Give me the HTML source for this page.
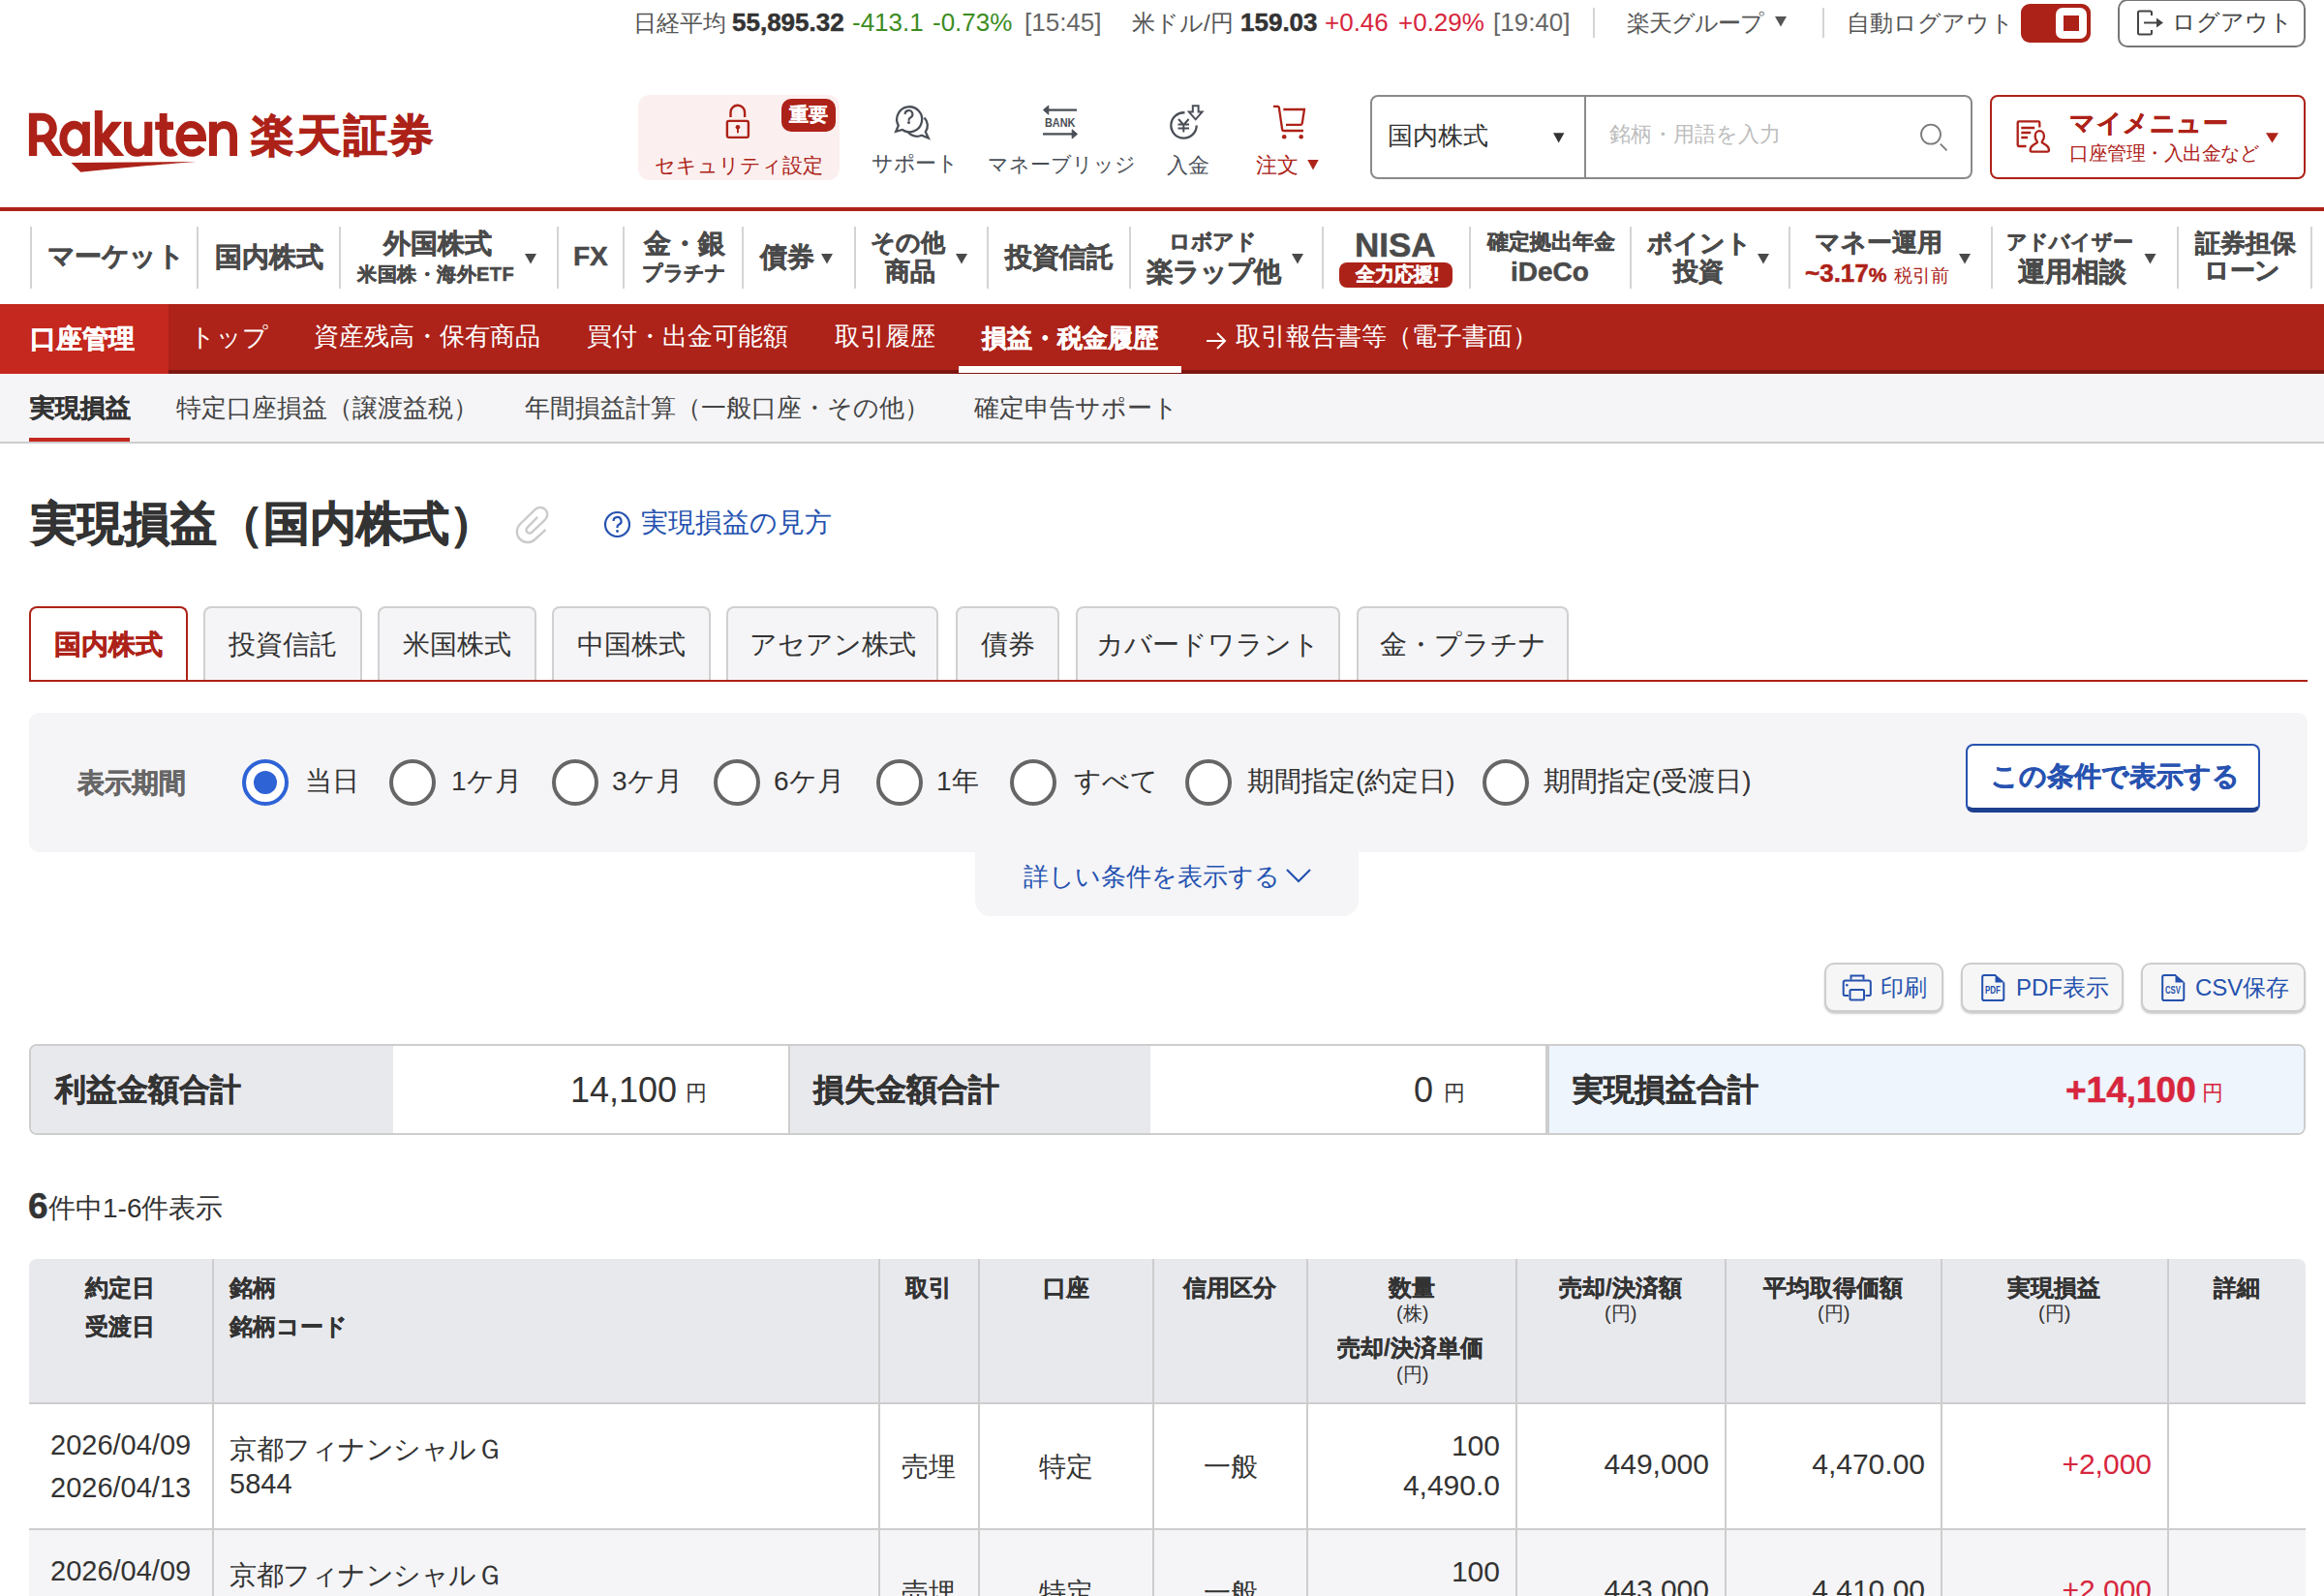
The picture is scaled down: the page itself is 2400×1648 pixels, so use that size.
<!DOCTYPE html>
<html><head><meta charset="utf-8">
<style>
html,body{margin:0;padding:0;}
body{width:2400px;height:1648px;overflow:hidden;position:relative;background:#fff;font-family:"Liberation Sans",sans-serif;color:#333;}
.a{position:absolute;white-space:nowrap;line-height:1;}
.b{font-weight:bold;-webkit-text-stroke:0.5px currentColor;}
.sk{-webkit-text-stroke:0.5px currentColor;}
.sep{position:absolute;width:2px;background:#d4d4d4;}
svg{position:absolute;overflow:visible;}
</style></head><body>

<!-- ===== TOP BAR ===== -->
<div class="a" style="left:654px;top:12px;font-size:24px;color:#555">日経平均</div>
<div class="a b" style="left:756px;top:10px;font-size:26px;color:#333">55,895.32</div>
<div class="a" style="left:880px;top:10px;font-size:26px;color:#3c8c22">-413.1</div>
<div class="a" style="left:963px;top:10px;font-size:26px;color:#3c8c22">-0.73%</div>
<div class="a" style="left:1058px;top:10px;font-size:26px;color:#666">[15:45]</div>
<div class="a" style="left:1169px;top:12px;font-size:24px;color:#555">米ドル/円</div>
<div class="a b" style="left:1281px;top:10px;font-size:26px;color:#333">159.03</div>
<div class="a" style="left:1368px;top:10px;font-size:26px;color:#d7263d">+0.46</div>
<div class="a" style="left:1444px;top:10px;font-size:26px;color:#d7263d">+0.29%</div>
<div class="a" style="left:1542px;top:10px;font-size:26px;color:#666">[19:40]</div>
<div class="sep" style="left:1645px;top:8px;height:31px;"></div>
<div class="a" style="left:1680px;top:12px;font-size:24px;color:#555;letter-spacing:-1px">楽天グループ</div>
<div class="sep" style="left:1882px;top:8px;height:31px;"></div>
<div class="a" style="left:1907px;top:12px;font-size:24px;color:#555">自動ログアウト</div>
<div style="position:absolute;left:2087px;top:4px;width:72px;height:40px;border-radius:9px;background:#ad2218;"></div>
<div style="position:absolute;left:2123px;top:8px;width:32px;height:32px;border-radius:7px;background:#fff;"></div>
<div style="position:absolute;left:2131px;top:16px;width:16px;height:16px;background:#ad2218;"></div>
<div style="position:absolute;left:2187px;top:-1px;width:190px;height:46px;border:2px solid #777;border-radius:10px;"></div>
<svg style="left:2206px;top:10px" width="30" height="28" viewBox="0 0 30 28"><path d="M16 6 V3 a1.5 1.5 0 0 0 -1.5 -1.5 H3.5 a1.5 1.5 0 0 0 -1.5 1.5 V24 a1.5 1.5 0 0 0 1.5 1.5 H14.5 a1.5 1.5 0 0 0 1.5 -1.5 V21" fill="none" stroke="#444" stroke-width="2"/><path d="M8 13.5 H22" stroke="#444" stroke-width="2"/><path d="M21 8.5 L28 13.5 L21 18.5Z" fill="#444"/></svg>
<div class="a" style="left:2243px;top:11px;font-size:24px;color:#444">ログアウト</div>

<!-- ===== HEADER ===== -->

<div class="a b" style="left:259px;top:117px;font-size:45px;color:#ad2218;letter-spacing:2.8px;-webkit-text-stroke:1.2px #ad2218">楽天証券</div>

<div style="position:absolute;left:659px;top:98px;width:208px;height:88px;border-radius:12px;background:#fbf0ef;"></div>
<div style="position:absolute;left:807px;top:102px;width:56px;height:34px;border-radius:10px;background:#ad2218;"></div>
<div class="a b" style="left:815px;top:108px;font-size:20px;color:#fff;-webkit-text-stroke:0.25px #fff">重要</div>

<div class="a" style="left:676px;top:160px;font-size:21px;color:#ad2218">セキュリティ設定</div>

<!-- support -->

<div class="a" style="left:900px;top:158px;font-size:22px;color:#4a4f57;letter-spacing:-0.5px">サポート</div>
<!-- bank -->

<div class="a" style="left:1020px;top:159px;font-size:21px;color:#4a4f57">マネーブリッジ</div>
<!-- deposit -->

<div class="a" style="left:1205px;top:160px;font-size:22px;color:#4a4f57">入金</div>
<!-- cart -->

<div class="a" style="left:1297px;top:160px;font-size:22px;color:#ad2218">注文</div>

<!-- search -->
<div style="position:absolute;left:1415px;top:98px;width:618px;height:83px;border:2px solid #8a8a8a;border-radius:8px;"></div>
<div style="position:absolute;left:1636px;top:100px;width:2px;height:83px;background:#8a8a8a;"></div>
<div class="a" style="left:1433px;top:127px;font-size:26px;color:#333">国内株式</div>
<div class="a" style="left:1662px;top:128px;font-size:22px;color:#bdbdbd">銘柄・用語を入力</div>


<!-- my menu -->
<div style="position:absolute;left:2055px;top:98px;width:322px;height:83px;border:2px solid #ad2218;border-radius:8px;"></div>

<div class="a b" style="left:2137px;top:114px;font-size:26px;color:#ad2218;letter-spacing:0.5px">マイメニュー</div>
<div class="a" style="left:2137px;top:149px;font-size:19.5px;color:#ad2218;letter-spacing:-0.5px">口座管理・入出金など</div>

<div style="position:absolute;left:0;top:214px;width:2400px;height:4px;background:#ad2218;"></div>

<!-- ===== GLOBAL NAV ===== -->
<div class="sep" style="left:31px;top:234px;height:64px"></div>
<div class="sep" style="left:203px;top:234px;height:64px"></div>
<div class="sep" style="left:350px;top:234px;height:64px"></div>
<div class="sep" style="left:575px;top:234px;height:64px"></div>
<div class="sep" style="left:643px;top:234px;height:64px"></div>
<div class="sep" style="left:766px;top:234px;height:64px"></div>
<div class="sep" style="left:882px;top:234px;height:64px"></div>
<div class="sep" style="left:1019px;top:234px;height:64px"></div>
<div class="sep" style="left:1166px;top:234px;height:64px"></div>
<div class="sep" style="left:1365px;top:234px;height:64px"></div>
<div class="sep" style="left:1517px;top:234px;height:64px"></div>
<div class="sep" style="left:1683px;top:234px;height:64px"></div>
<div class="sep" style="left:1847px;top:234px;height:64px"></div>
<div class="sep" style="left:2056px;top:234px;height:64px"></div>
<div class="sep" style="left:2248px;top:234px;height:64px"></div>
<div class="sep" style="left:2386px;top:234px;height:64px"></div>
<div class="sk" style="color:#4a4a4a;font-weight:bold">
<div class="a" style="left:49px;top:251px;font-size:28px;letter-spacing:-0.6px">マーケット</div>
<div class="a" style="left:222px;top:252px;font-size:28px">国内株式</div>
<div class="a" style="left:396px;top:238px;font-size:28px">外国株式</div>
<div class="a" style="left:369px;top:273px;font-size:20px;letter-spacing:0.5px">米国株・海外ETF</div>
<div class="a" style="left:592px;top:251px;font-size:28px">FX</div>
<div class="a" style="left:665px;top:238px;font-size:28px">金・銀</div>
<div class="a" style="left:663px;top:271px;font-size:21px;letter-spacing:-0.5px">プラチナ</div>
<div class="a" style="left:785px;top:252px;font-size:28px">債券</div>
<div class="a" style="left:899px;top:238px;font-size:25px">その他</div>
<div class="a" style="left:914px;top:267px;font-size:26px">商品</div>
<div class="a" style="left:1038px;top:252px;font-size:28px">投資信託</div>
<div class="a" style="left:1207px;top:239px;font-size:22px;letter-spacing:-0.5px">ロボアド</div>
<div class="a" style="left:1184px;top:267px;font-size:28px;letter-spacing:-1px">楽ラップ他</div>
<div class="a" style="left:1399px;top:235px;font-size:35px">NISA</div>
<div style="position:absolute;left:1383px;top:271px;width:117px;height:26px;border-radius:8px;background:#ad2218"></div>
<div class="a" style="left:1400px;top:273px;font-size:20px;color:#fff">全力応援!</div>
<div class="a" style="left:1536px;top:239px;font-size:22px">確定拠出年金</div>
<div class="a" style="left:1560px;top:267px;font-size:28px">iDeCo</div>
<div class="a" style="left:1701px;top:238px;font-size:26px">ポイント</div>
<div class="a" style="left:1728px;top:267px;font-size:26px">投資</div>
<div class="a" style="left:1874px;top:237px;font-size:26px">マネー運用</div>
<div class="a" style="left:1864px;top:269px;font-size:26px;color:#ad2218">~3.17<span style="font-size:21px">%</span> <span style="font-size:19px;font-weight:normal;-webkit-text-stroke:0">税引前</span></div>
<div class="a" style="left:2072px;top:239px;font-size:21px">アドバイザー</div>
<div class="a" style="left:2084px;top:267px;font-size:28px">運用相談</div>
<div class="a" style="left:2267px;top:238px;font-size:26px">証券担保</div>
<div class="a" style="left:2276px;top:266px;font-size:26px;letter-spacing:-0.5px">ローン</div>
</div>

<!-- ===== RED NAV ===== -->
<div style="position:absolute;left:0;top:314px;width:2400px;height:72px;background:#ad2219"></div>
<div style="position:absolute;left:174px;top:382px;width:2226px;height:4px;background:#7e1610"></div>
<div style="position:absolute;left:0;top:314px;width:174px;height:72px;background:#c4281e"></div>
<div style="color:#fff">
<div class="a b" style="left:31px;top:337px;font-size:27px">口座管理</div>
<div class="a" style="left:196px;top:335px;font-size:26px">トップ</div>
<div class="a" style="left:324px;top:334px;font-size:26px">資産残高・保有商品</div>
<div class="a" style="left:606px;top:334px;font-size:26px">買付・出金可能額</div>
<div class="a" style="left:862px;top:334px;font-size:26px">取引履歴</div>
<div class="a b" style="left:1014px;top:336px;font-size:26px">損益・税金履歴</div>
<div style="position:absolute;left:990px;top:378px;width:230px;height:7px;background:#fff"></div>
<svg style="left:1245px;top:342px" width="22" height="20" viewBox="0 0 22 20"><path d="M1 10 H20 M12 2 L20 10 L12 18" fill="none" stroke="#fff" stroke-width="2"/></svg>
<div class="a" style="left:1276px;top:334px;font-size:26px">取引報告書等（電子書面）</div>
</div>

<!-- ===== SUB NAV ===== -->
<div style="position:absolute;left:0;top:386px;width:2400px;height:70px;background:#f5f5f7;border-bottom:2px solid #cdcdcd"></div>
<div class="a b" style="left:31px;top:409px;font-size:25.5px;color:#333">実現損益</div>
<div style="position:absolute;left:30px;top:452px;width:104px;height:4px;background:#c4281e"></div>
<div class="a" style="left:182px;top:408px;font-size:26px;color:#444">特定口座損益（譲渡益税）</div>
<div class="a" style="left:542px;top:408px;font-size:26px;color:#444">年間損益計算（一般口座・その他）</div>
<div class="a" style="left:1006px;top:408px;font-size:26px;color:#444">確定申告サポート</div>

<!-- ===== TITLE ===== -->
<div class="a b" style="left:32px;top:517px;font-size:48px;color:#333;-webkit-text-stroke:0.9px #333">実現損益（国内株式）</div>

<svg style="left:623px;top:527px" width="30" height="30" viewBox="0 0 30 30"><circle cx="14.5" cy="14.5" r="12.5" fill="none" stroke="#2552b0" stroke-width="2.2"/><path d="M10.5 11 a4 4 0 1 1 5.5 3.7 c-1 .4 -1.5 1 -1.5 2.3 V18" fill="none" stroke="#2552b0" stroke-width="2.2"/><circle cx="14.5" cy="21.5" r="1.4" fill="#2552b0"/></svg>
<div class="a" style="left:662px;top:526px;font-size:28px;color:#2552b0">実現損益の見方</div>

<!-- ===== TABS ===== -->
<style>
.tab{position:absolute;top:626px;height:76px;border:2px solid #d0d0d0;border-bottom:none;border-radius:8px 8px 0 0;background:#f5f5f7;box-sizing:border-box;display:flex;align-items:center;justify-content:center;font-size:28px;color:#333;line-height:1;padding-top:2px;}
.tab.on{background:#fff;border-color:#ad2218;color:#ad2218;font-weight:bold;height:76px;-webkit-text-stroke:0.5px currentColor;}
</style>
<div class="tab on" style="left:30px;width:164px">国内株式</div>
<div class="tab" style="left:210px;width:164px">投資信託</div>
<div class="tab" style="left:390px;width:164px">米国株式</div>
<div class="tab" style="left:570px;width:164px">中国株式</div>
<div class="tab" style="left:750px;width:219px">アセアン株式</div>
<div class="tab" style="left:987px;width:107px">債券</div>
<div class="tab" style="left:1111px;width:273px">カバードワラント</div>
<div class="tab" style="left:1401px;width:219px">金・プラチナ</div>
<div style="position:absolute;left:30px;top:702px;width:2353px;height:2px;background:#ad2218"></div>

<!-- ===== FILTER ===== -->
<style>
.rd{position:absolute;top:784px;width:40px;height:40px;border:4px solid #666;border-radius:50%;background:#fff;}
.rd.on{border-color:#2e63d6;}
.rd.on:after{content:"";position:absolute;left:8px;top:8px;width:24px;height:24px;border-radius:50%;background:#2e63d6;}
</style>
<div style="position:absolute;left:30px;top:736px;width:2353px;height:144px;border-radius:10px;background:#f5f5f7"></div>
<div style="position:absolute;left:1007px;top:870px;width:396px;height:76px;border-radius:0 0 16px 16px;background:#f5f5f7"></div>
<div class="a b" style="left:80px;top:795px;font-size:28px;color:#666">表示期間</div>
<div class="rd on" style="left:250px"></div>
<div class="a" style="left:315px;top:793px;font-size:28px">当日</div>
<div class="rd" style="left:402px"></div>
<div class="a" style="left:466px;top:793px;font-size:28px">1ケ月</div>
<div class="rd" style="left:570px"></div>
<div class="a" style="left:632px;top:793px;font-size:28px">3ケ月</div>
<div class="rd" style="left:737px"></div>
<div class="a" style="left:799px;top:793px;font-size:28px">6ケ月</div>
<div class="rd" style="left:905px"></div>
<div class="a" style="left:967px;top:793px;font-size:28px">1年</div>
<div class="rd" style="left:1043px"></div>
<div class="a" style="left:1109px;top:793px;font-size:28px">すべて</div>
<div class="rd" style="left:1224px"></div>
<div class="a" style="left:1288px;top:793px;font-size:28px">期間指定(約定日)</div>
<div class="rd" style="left:1531px"></div>
<div class="a" style="left:1594px;top:793px;font-size:28px">期間指定(受渡日)</div>
<div style="position:absolute;left:2030px;top:768px;width:300px;height:64px;border:2px solid #2752b0;border-bottom:5px solid #1d3f8f;border-radius:8px;background:#fff"></div>
<div class="a b" style="left:2056px;top:788px;font-size:28px;color:#2752b0">この条件で表示する</div>
<div class="a" style="left:1057px;top:892px;font-size:26px;color:#2552b0">詳しい条件を表示する</div>
<svg style="left:1327px;top:895px" width="28" height="18" viewBox="0 0 28 18"><path d="M2 3 L14 15 L26 3" fill="none" stroke="#2552b0" stroke-width="2.2"/></svg>

<!-- ===== BUTTONS ===== -->
<style>
.btn{position:absolute;top:994px;height:47px;border:2px solid #cdcdcd;border-radius:10px;background:#f6f6f6;box-shadow:0 2px 2px rgba(0,0,0,0.2);}
</style>
<div class="btn" style="left:1884px;width:119px"></div>
<div class="btn" style="left:2025px;width:164px"></div>
<div class="btn" style="left:2211px;width:166px"></div>

<div class="a" style="left:1942px;top:1008px;font-size:24px;color:#2451ad">印刷</div>

<div class="a" style="left:2082px;top:1008px;font-size:24px;color:#2451ad">PDF表示</div>

<div class="a" style="left:2267px;top:1008px;font-size:24px;color:#2451ad">CSV保存</div>

<!-- ===== SUMMARY ===== -->
<div style="position:absolute;left:30px;top:1078px;width:2351px;height:94px;border:2px solid #cdcdcd;border-radius:8px;box-sizing:border-box;overflow:hidden;background:#fff">
  <div style="position:absolute;left:0;top:0;width:374px;height:100%;background:#e8e9ed"></div>
  <div style="position:absolute;left:782px;top:0;width:2px;height:100%;background:#cdcdcd"></div>
  <div style="position:absolute;left:784px;top:0;width:372px;height:100%;background:#e8e9ed"></div>
  <div style="position:absolute;left:1564px;top:0;width:4px;height:100%;background:#cdcdcd"></div>
  <div style="position:absolute;left:1568px;top:0;width:800px;height:100%;background:#eef5fd"></div>
</div>
<div class="a b" style="left:57px;top:1109px;font-size:32px">利益金額合計</div>
<div class="a" style="left:589px;top:1108px;font-size:36px">14,100</div>
<div class="a" style="left:708px;top:1118px;font-size:22px">円</div>
<div class="a b" style="left:840px;top:1109px;font-size:32px">損失金額合計</div>
<div class="a" style="left:1460px;top:1108px;font-size:36px">0</div>
<div class="a" style="left:1491px;top:1118px;font-size:22px">円</div>
<div class="a b" style="left:1624px;top:1109px;font-size:32px">実現損益合計</div>
<div class="a b" style="left:2133px;top:1107px;font-size:37px;color:#d7263d">+14,100</div>
<div class="a" style="left:2274px;top:1118px;font-size:22px;color:#d7263d">円</div>

<!-- ===== COUNT ===== -->
<div class="a b" style="left:29px;top:1227px;font-size:37px">6</div><div class="a" style="left:50px;top:1234px;font-size:28px">件中1-6件表示</div>

<!-- ===== TABLE ===== -->
<div style="position:absolute;left:30px;top:1300px;width:2351px;height:148px;background:#e8e9ed;border-radius:8px 8px 0 0"></div>
<div style="position:absolute;left:30px;top:1448px;width:2351px;height:2px;background:#cdcdcd"></div>
<div style="position:absolute;left:30px;top:1450px;width:2351px;height:128px;background:#fff"></div>
<div style="position:absolute;left:30px;top:1578px;width:2351px;height:2px;background:#cdcdcd"></div>
<div style="position:absolute;left:30px;top:1580px;width:2351px;height:80px;background:#f5f5f7"></div>
<div class="sep" style="left:219px;top:1300px;height:360px;background:#cdcdcd"></div>
<div class="sep" style="left:907px;top:1300px;height:360px;background:#cdcdcd"></div>
<div class="sep" style="left:1010px;top:1300px;height:360px;background:#cdcdcd"></div>
<div class="sep" style="left:1190px;top:1300px;height:360px;background:#cdcdcd"></div>
<div class="sep" style="left:1349px;top:1300px;height:360px;background:#cdcdcd"></div>
<div class="sep" style="left:1565px;top:1300px;height:360px;background:#cdcdcd"></div>
<div class="sep" style="left:1781px;top:1300px;height:360px;background:#cdcdcd"></div>
<div class="sep" style="left:2004px;top:1300px;height:360px;background:#cdcdcd"></div>
<div class="sep" style="left:2238px;top:1300px;height:360px;background:#cdcdcd"></div>
<div style="font-weight:bold;color:#333;-webkit-text-stroke:0.3px #333">
<div class="a" style="left:88px;top:1318px;font-size:24px">約定日</div>
<div class="a" style="left:88px;top:1358px;font-size:24px">受渡日</div>
<div class="a" style="left:237px;top:1318px;font-size:24px">銘柄</div>
<div class="a" style="left:237px;top:1358px;font-size:24px">銘柄コード</div>
<div class="a" style="left:935px;top:1318px;font-size:24px">取引</div>
<div class="a" style="left:1077px;top:1318px;font-size:24px">口座</div>
<div class="a" style="left:1222px;top:1318px;font-size:24px">信用区分</div>
<div class="a" style="left:1434px;top:1318px;font-size:24px">数量</div>
<div class="a" style="left:1442px;top:1346px;font-size:20px;font-weight:normal;-webkit-text-stroke:0">(株)</div>
<div class="a" style="left:1381px;top:1380px;font-size:24px">売却/決済単価</div>
<div class="a" style="left:1442px;top:1409px;font-size:20px;font-weight:normal;-webkit-text-stroke:0">(円)</div>
<div class="a" style="left:1610px;top:1318px;font-size:24px">売却/決済額</div>
<div class="a" style="left:1657px;top:1346px;font-size:20px;font-weight:normal;-webkit-text-stroke:0">(円)</div>
<div class="a" style="left:1821px;top:1318px;font-size:24px">平均取得価額</div>
<div class="a" style="left:1877px;top:1346px;font-size:20px;font-weight:normal;-webkit-text-stroke:0">(円)</div>
<div class="a" style="left:2073px;top:1318px;font-size:24px">実現損益</div>
<div class="a" style="left:2105px;top:1346px;font-size:20px;font-weight:normal;-webkit-text-stroke:0">(円)</div>
<div class="a" style="left:2286px;top:1318px;font-size:24px">詳細</div>
</div>
<div style="color:#333">
<div class="a" style="left:52px;top:1478px;font-size:29px">2026/04/09</div>
<div class="a" style="left:52px;top:1522px;font-size:29px">2026/04/13</div>
<div class="a" style="left:237px;top:1483px;font-size:28px;letter-spacing:-0.5px">京都フィナンシャルＧ</div>
<div class="a" style="left:237px;top:1518px;font-size:29px">5844</div>
<div class="a" style="left:931px;top:1501px;font-size:28px">売埋</div>
<div class="a" style="left:1073px;top:1501px;font-size:28px">特定</div>
<div class="a" style="left:1243px;top:1501px;font-size:28px">一般</div>
<div class="a" style="right:851px;top:1478px;font-size:30px">100</div>
<div class="a" style="right:851px;top:1519px;font-size:30px">4,490.0</div>
<div class="a" style="right:635px;top:1497px;font-size:30px">449,000</div>
<div class="a" style="right:412px;top:1497px;font-size:30px">4,470.00</div>
<div class="a" style="right:178px;top:1497px;font-size:30px;color:#d7263d">+2,000</div>

<div class="a" style="left:52px;top:1608px;font-size:29px">2026/04/09</div>
<div class="a" style="left:237px;top:1613px;font-size:28px;letter-spacing:-0.5px">京都フィナンシャルＧ</div>
<div class="a" style="left:931px;top:1631px;font-size:28px">売埋</div>
<div class="a" style="left:1073px;top:1631px;font-size:28px">特定</div>
<div class="a" style="left:1243px;top:1631px;font-size:28px">一般</div>
<div class="a" style="right:851px;top:1608px;font-size:30px">100</div>
<div class="a" style="right:635px;top:1627px;font-size:30px">443,000</div>
<div class="a" style="right:412px;top:1627px;font-size:30px">4,410.00</div>
<div class="a" style="right:178px;top:1627px;font-size:30px;color:#d7263d">+2,000</div>
</div>


<!-- ICON OVERLAY -->
<svg style="left:0;top:0" width="2400" height="1648" viewBox="0 0 2400 1648">
<g fill="#555"><path d="M1833 17 H1845 L1839 27.5Z"/></g>
<!-- lock -->
<g fill="none" stroke="#ad2218" stroke-width="2.4">
<path d="M754.5 121 V116 a7.3 7.3 0 0 1 14.6 0 V121"/>
<rect x="750.9" y="124.9" width="22" height="17" rx="1.8"/>
</g>
<circle cx="761.9" cy="131.2" r="2.3" fill="#ad2218"/><rect x="761" y="132" width="1.9" height="5.3" fill="#ad2218"/>
<!-- support -->
<g fill="none" stroke="#4a4f57" stroke-width="2.3" stroke-linejoin="miter">
<path d="M931.8 134 A13 13 0 1 0 927.8 129.6 L925.2 135.8 Z"/>
<path d="M954.5 121.5 A11.5 11.5 0 0 1 955.8 136.2 L958.8 142.6 L951.8 139.8 A12 12 0 0 1 937.6 136.3"/>
<path d="M934.6 118 a3.9 3.9 0 1 1 5.6 3.5 c-1 .5 -1.6 1.1 -1.6 2.3 v0.9" stroke-width="2.1"/>
</g>
<circle cx="938.5" cy="126.4" r="1.5" fill="#4a4f57"/>
<!-- bank -->
<g stroke="#4a4f57" stroke-width="2.3" fill="#4a4f57">
<path d="M1081 113.6 H1112" fill="none"/>
<path d="M1077.5 113.6 L1082.8 109 L1082.8 118.2Z" stroke-width="1" stroke-linejoin="round"/>
<path d="M1077 138.4 H1108" fill="none"/>
<path d="M1112.5 138.4 L1107.2 133.8 L1107.2 143Z" stroke-width="1" stroke-linejoin="round"/>
</g>
<text x="1079" y="130.6" textLength="31.5" lengthAdjust="spacingAndGlyphs" font-family="Liberation Sans" font-weight="bold" font-size="12" fill="#4a4f57">BANK</text>
<!-- deposit -->
<g fill="none" stroke="#4a4f57" stroke-width="2.3">
<path d="M1223.5 116.3 A13.2 13.2 0 1 0 1235.7 129.5"/>
<path d="M1217 123 L1222.3 129 L1227.6 123 M1222.3 129 V136.6 M1216.5 128.6 H1228 M1216.5 132.6 H1228" stroke-width="2"/>
<path d="M1231.8 109.3 H1237.6 V115.6 H1241.5 L1234.7 123.3 L1227.9 115.6 H1231.8 Z" stroke-width="2"/>
</g>
<!-- cart -->
<g fill="none" stroke="#ad2218" stroke-width="2.3">
<path d="M1315 109.8 H1319.5 q1 0 1.3 1 L1324.2 133.8 q0.2 1.2 1.4 1.2 H1346"/>
<path d="M1325.3 113 H1347 L1344.8 127.2 q-0.3 1.6 -2 1.6 H1328"/>
</g>
<circle cx="1326.2" cy="141.2" r="2.3" fill="#ad2218"/><circle cx="1343.7" cy="141.2" r="2.3" fill="#ad2218"/>
<path d="M1350.3 165 H1361.7 L1356 175.5Z" fill="#ad2218"/>
<!-- search -->
<path d="M1604 137.2 H1615.4 L1609.7 147.6Z" fill="#333"/>
<g fill="none" stroke="#7a7a7a" stroke-width="1.8"><circle cx="1994" cy="138.7" r="10"/><path d="M2003.8 148.6 L2010.5 155.4"/></g>
<!-- mymenu -->
<g fill="none" stroke="#ad2218" stroke-width="2.3">
<path d="M2092.5 151 H2085 q-1.3 0 -1.3 -1.3 V126.6 q0 -1.3 1.3 -1.3 H2105 q1.3 0 1.3 1.3 V131.5"/>
<path d="M2087.3 132 H2101.2 M2087.3 137 H2097.2 M2087.3 142 H2094"/>
<path d="M2106.3 135.2 c-2.7 0 -4.6 2.3 -4.6 5.6 c0 2.4 0.8 4 2 5.2 c0.4 0.5 0.2 1.3 -0.4 1.6 l-3.5 2.1 c-2.2 1.3 -3.2 3 -3.2 5.6 q0 1.3 1.3 1.3 h16.8 q1.3 0 1.3 -1.3 c0 -2.6 -1 -4.3 -3.2 -5.6 l-3.5 -2.1 c-0.6 -0.3 -0.8 -1.1 -0.4 -1.6 c1.2 -1.2 2 -2.8 2 -5.2 c0 -3.3 -1.9 -5.6 -4.6 -5.6Z"/>
</g>
<path d="M2340 137.2 H2353 L2346.5 147.6Z" fill="#ad2218"/>
<!-- global nav triangles -->
<g fill="#4a4a4a">
<path d="M542 262 H554 L548 272.5Z"/>
<path d="M848 262 H860 L854 272.5Z"/>
<path d="M987 262 H999 L993 272.5Z"/>
<path d="M1334 262 H1346 L1340 272.5Z"/>
<path d="M1815 262 H1827 L1821 272.5Z"/>
<path d="M2023 262 H2035 L2029 272.5Z"/>
<path d="M2214.5 262 H2226.5 L2220.5 272.5Z"/>
</g>
<!-- button icons -->
<g fill="none" stroke="#2451ad" stroke-width="2">
<path d="M1911.5 1011.5 V1007.5 H1924.5 V1011.5"/>
<path d="M1909 1028 H1905 q-1.3 0 -1.3 -1.3 V1014.5 q0 -2 2 -2 H1929.8 q2 0 2 2 V1026.7 q0 1.3 -1.3 1.3 H1926.5"/>
<rect x="1910.5" y="1022" width="14.5" height="10.5" rx="1"/>
<path d="M2061 1007 H2049 q-1.8 0 -1.8 1.8 V1031.2 q0 1.8 1.8 1.8 H2067.5 q1.8 0 1.8 -1.8 V1014.5"/>
<path d="M2247 1007 H2235 q-1.8 0 -1.8 1.8 V1031.2 q0 1.8 1.8 1.8 H2253.5 q1.8 0 1.8 -1.8 V1014.5"/>
</g>
<circle cx="1907.3" cy="1017.3" r="1.3" fill="#2451ad"/>
<path d="M2060.5 1006 L2070.3 1014.5 H2060.5Z" fill="#2451ad"/>
<path d="M2246.5 1006 L2256.3 1014.5 H2246.5Z" fill="#2451ad"/>
<text x="2050" y="1025.8" textLength="16" lengthAdjust="spacingAndGlyphs" font-family="Liberation Sans" font-weight="bold" font-size="11" fill="#2451ad">PDF</text>
<text x="2236" y="1025.8" textLength="16" lengthAdjust="spacingAndGlyphs" font-family="Liberation Sans" font-weight="bold" font-size="11" fill="#2451ad">CSV</text>
<path d="M563.5 546.9 L552.5 557 A11 11 0 0 1 537.3 541 L552.6 526.2 A7.3 7.3 0 0 1 563.2 536.3 L549 549.8 A3.4 3.4 0 0 1 544.7 544.5 L555.1 533.9" fill="none" stroke="#cbcbcb" stroke-width="2.4" stroke-linecap="butt"/>
<!-- logo -->
<g fill="#ad2218" fill-rule="evenodd">
<path d="M29.9 116.8 H43.1 C52 116.8 58.8 123.5 58.8 132.5 C58.8 138 56.5 142 52.9 144.4 L64.8 160.9 H54.2 L44.6 146.7 H38.2 V160.9 H29.9 Z M38.2 124.8 H43.1 C47.5 124.8 50.8 128 50.8 132 C50.8 136 47.5 139.2 43.1 139.2 H38.2 Z"/>
<path d="M92.9 125.8 V160.9 H85.1 V157.5 C82.8 160.2 80 161.6 76.8 161.6 C67.8 161.6 61.4 153.5 61.4 143.2 C61.4 132.9 67.8 124.8 76.8 124.8 C80 124.8 82.8 126.2 85.1 128.9 V125.8 Z M85.2 143.5 A7.9 10.2 0 1 0 69.4 143.5 A7.9 10.2 0 1 0 85.2 143.5 Z"/>
<path d="M97.8 114.1 H105.8 V138 L115.3 125.8 H126.2 L112.8 142.8 L128.5 160.9 H117.9 L105.8 146.5 V160.9 H97.8 Z"/>
<path d="M128 125.8 H135.8 V145 C135.8 150.5 138.5 153.7 142.6 153.7 C146.8 153.7 149.2 150.5 149.2 145 V125.8 H157.3 V161 H149.2 V159 C147.5 160.8 145 161.8 142 161.8 C133.5 161.8 128 155.5 128 146 Z"/>
<path d="M164.7 116.9 H172.6 V125.8 H179.1 V134.1 H172.6 V147.5 C172.6 151.5 174 153.7 176.6 153.7 C177.2 153.7 178 153.5 178.5 153.2 L183.9 159.6 C182 161 179.5 161.8 176.6 161.8 C169.5 161.8 164.7 157 164.7 148.5 V134.1 H160.2 V125.8 H164.7 Z"/>
<path d="M213 145.9 H189.8 C191 151 194 154.3 198.2 154.3 C201.3 154.3 203.8 152.8 205.4 150.2 L211.9 154 C209 158.8 204 161.8 198 161.8 C188.5 161.8 181.5 154 181.5 143.3 C181.5 132.5 188.5 124.9 197.3 124.9 C206.3 124.9 213 132.3 213 142.5 Z M189.8 138.9 H204.6 C203.5 134.8 200.8 132.2 197.3 132.2 C193.8 132.2 190.9 134.8 189.8 138.9 Z"/>
<path d="M215.9 125.8 H224 V128.5 C225.8 126.3 228.3 124.9 231.2 124.9 C239.3 124.9 245 130.8 245 140 V161 H237.2 V141 C237.2 136 235 133 231 133 C227 133 224 136 224 141 V161 H215.9 Z"/>
<path d="M73.5 167.9 L202.5 167 C170 169.5 120 173.5 83.3 177.8 Z"/>
</g>
</svg>
</body></html>
